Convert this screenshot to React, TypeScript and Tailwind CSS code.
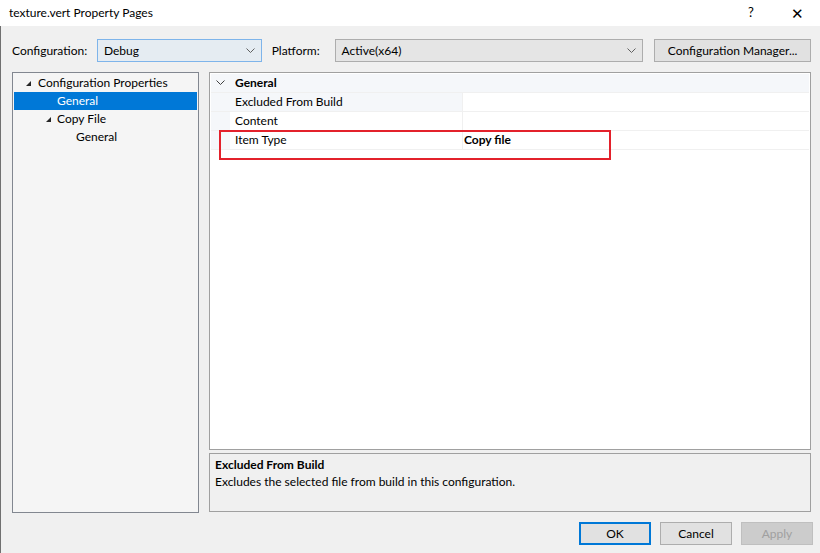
import React from "react";

const font = { fontFamily: '"Segoe UI", Lato, "Noto Sans", sans-serif' };

const Chevron = ({ className }: { className?: string }) => (
  <svg width="9" height="6" viewBox="0 0 9 6" className={className}>
    <path d="M0.5 0.5 L4.5 4.5 L8.5 0.5" fill="none" stroke="currentColor" strokeWidth="1" />
  </svg>
);

const Tri = () => (
  <svg width="7" height="7" viewBox="0 0 7 7">
    <path d="M6 1 L6 6 L1 6 Z" fill="#262626" />
  </svg>
);

const Select = ({ value, width, focused }: { value: string; width: string; focused?: boolean }) => (
  <div
    className={`${width} h-[23px] flex items-center justify-between pl-[6px] pr-[6px] border ${
      focused ? "bg-[#e5ecf2] border-[#7eb4ea]" : "bg-[#e5e5e5] border-[#adadad]"
    }`}
  >
    <span>{value}</span>
    <Chevron className="text-[#606060]" />
  </div>
);

const PropRow = ({ name, value, tinted }: { name: string; value?: string; tinted?: boolean }) => (
  <div className="flex h-[19px] border-b border-[#f0f0f0]">
    <div className="w-[19px] bg-[#f5f7fa]" />
    <div className={`w-[233px] pl-[5px] flex items-center border-r border-[#f0f0f0] ${tinted ? "bg-[#f5f7fa]" : ""}`}>
      {name}
    </div>
    <div className="flex-1 pl-[1px] flex items-center font-bold">{value}</div>
  </div>
);

const Button = ({ label, kind }: { label: string; kind?: "default" | "disabled" }) => (
  <div
    className={`w-[72px] h-[23px] flex items-center justify-center ${
      kind === "default"
        ? "border-2 border-[#0078d7] bg-[#e1e1e1]"
        : kind === "disabled"
        ? "border border-[#bfbfbf] bg-[#cccccc] text-[#a0a0a0]"
        : "border border-[#adadad] bg-[#e1e1e1]"
    }`}
  >
    {label}
  </div>
);

export default function App() {
  return (
    <div className="w-[820px] h-[553px] bg-[#f0f0f0] text-[12px] text-black flex flex-col overflow-hidden" style={font}>
      {/* Title bar */}
      <div className="h-[26px] bg-white flex items-center justify-between pl-[9px] shrink-0">
        <span>texture.vert Property Pages</span>
        <div className="flex items-center">
          <span className="w-[46px] text-center text-[13px]">?</span>
          <span className="w-[46px] text-center text-[15px] font-light">✕</span>
        </div>
      </div>

      <div className="flex-1 flex flex-col border-l border-[#707070] pl-[11px] pr-[9px]">
        {/* Configuration row */}
        <div className="flex items-center mt-[13px] h-[23px]">
          <span className="w-[85px]">Configuration:</span>
          <Select value="Debug" width="w-[165px]" focused />
          <span className="ml-[10px] w-[63px]">Platform:</span>
          <Select value="Active(x64)" width="w-[309px]" />
          <div className="ml-[11px] w-[157px] h-[23px] border border-[#adadad] bg-[#e1e1e1] flex items-center justify-center">
            Configuration Manager...
          </div>
        </div>

        {/* Panels */}
        <div className="flex mt-[10px] h-[441px]">
          {/* Tree */}
          <div className="w-[187px] border border-[#828790] bg-[#f5f5f5] pt-[1px] px-[1px]">
            <div className="h-[18px] flex items-center pl-[11px]">
              <Tri />
              <span className="ml-[6px]">Configuration Properties</span>
            </div>
            <div className="h-[18px] flex items-center pl-[43px] bg-[#0078d7] text-white">General</div>
            <div className="h-[18px] flex items-center pl-[31px]">
              <Tri />
              <span className="ml-[5px]">Copy File</span>
            </div>
            <div className="h-[18px] flex items-center pl-[62px]">General</div>
          </div>

          <div className="ml-[10px] flex-1 flex flex-col">
            {/* Property grid */}
            <div className="relative h-[378px] border border-[#a0a0a0] bg-white pt-[1px] px-[1px]">
              <div className="h-[19px] flex items-center bg-[#f5f7fa] border-b border-[#f0f0f0]">
                <Chevron className="ml-[5px] text-[#404040]" />
                <span className="ml-[10px] font-bold">General</span>
              </div>
              <PropRow name="Excluded From Build" tinted />
              <PropRow name="Content" />
              <PropRow name="Item Type" value="Copy file" />
              {/* annotation */}
              <div className="absolute left-[9px] top-[57px] w-[392px] h-[30px] border-2 border-[#e3212b]" />
            </div>

            {/* Description */}
            <div className="mt-[3px] h-[59px] border border-[#a0a0a0] bg-[#f0f0f0] px-[5px] pt-[2px]">
              <div className="font-bold leading-[17px]">Excluded From Build</div>
              <div className="leading-[17px]">Excludes the selected file from build in this configuration.</div>
            </div>
          </div>
        </div>

        {/* Buttons */}
        <div className="flex justify-end gap-[9px] mt-[9px] mr-[-2px]">
          <Button label="OK" kind="default" />
          <Button label="Cancel" />
          <Button label="Apply" kind="disabled" />
        </div>
      </div>
    </div>
  );
}
